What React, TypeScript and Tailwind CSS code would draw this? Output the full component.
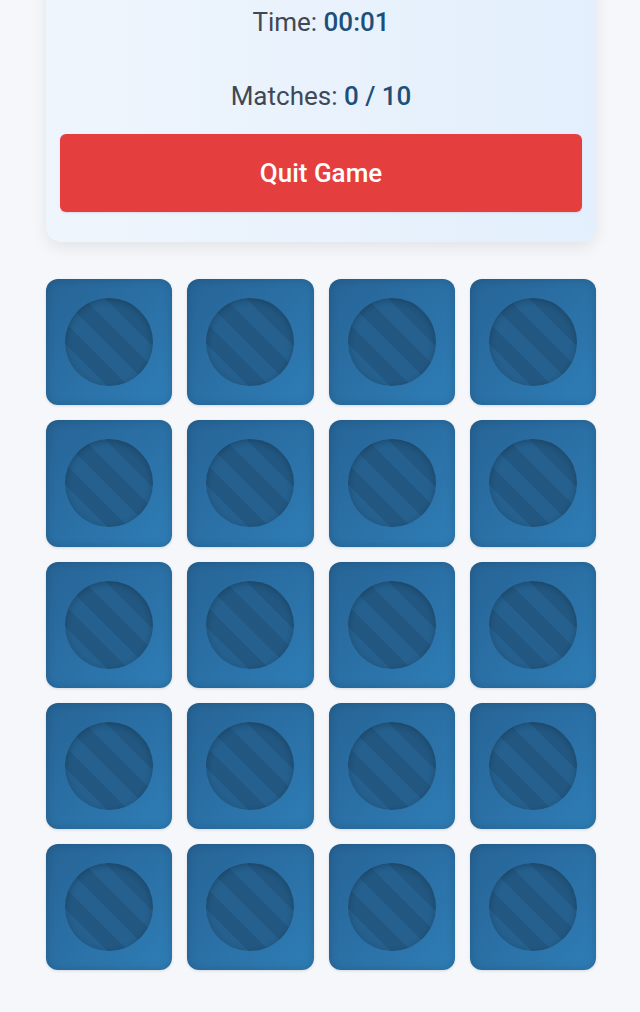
import React from 'react';

const CARD_COUNT = 20;

const CardBack: React.FC = () => (
  <div className="aspect-square rounded-[12px] bg-gradient-to-br from-[#276496] to-[#2e7db6] shadow-[inset_0_0_10px_rgba(0,0,0,0.16),0_1px_3px_rgba(0,0,0,0.12)] flex items-center justify-center">
    <div className="w-[88px] h-[88px] rounded-full bg-[#25608e] bg-[repeating-linear-gradient(45deg,rgba(0,0,0,0.09)_0px,rgba(0,0,0,0.09)_15px,transparent_15px,transparent_30px)] shadow-[inset_0_2px_6px_rgba(0,0,0,0.22)]" />
  </div>
);

export default function App() {
  return (
    <div className="min-h-[1012px] bg-[#f5f7fa] overflow-hidden font-['Roboto','Liberation_Sans',sans-serif]">
      <div className="w-[550px] ml-[46px]">
        {/* Status panel (scrolled partly out of view) */}
        <div className="-mt-[40px] pt-[46px] px-[14px] pb-[30px] rounded-[16px] bg-gradient-to-r from-[#eff5fc] to-[#e3effd] shadow-[0_6px_16px_rgba(0,0,0,0.08)] flex flex-col items-center">
          <p className="text-[26px] leading-[32px] text-[#3f4854]">
            Time: <span className="font-medium text-[#1d4f78]">00:01</span>
          </p>
          <p className="mt-[42px] text-[26px] leading-[32px] text-[#3f4854]">
            Matches: <span className="font-medium text-[#1d4f78]">0 / 10</span>
          </p>
          <button className="mt-[22px] w-full h-[78px] rounded-[6px] bg-[#e53e3e] text-white text-[26px] font-medium shadow-[0_1px_2px_rgba(0,0,0,0.1)]">
            Quit Game
          </button>
        </div>

        {/* Card grid */}
        <div className="mt-[37px] grid grid-cols-4 gap-[15px]">
          {Array.from({ length: CARD_COUNT }).map((_, i) => (
            <CardBack key={i} />
          ))}
        </div>
      </div>
    </div>
  );
}
